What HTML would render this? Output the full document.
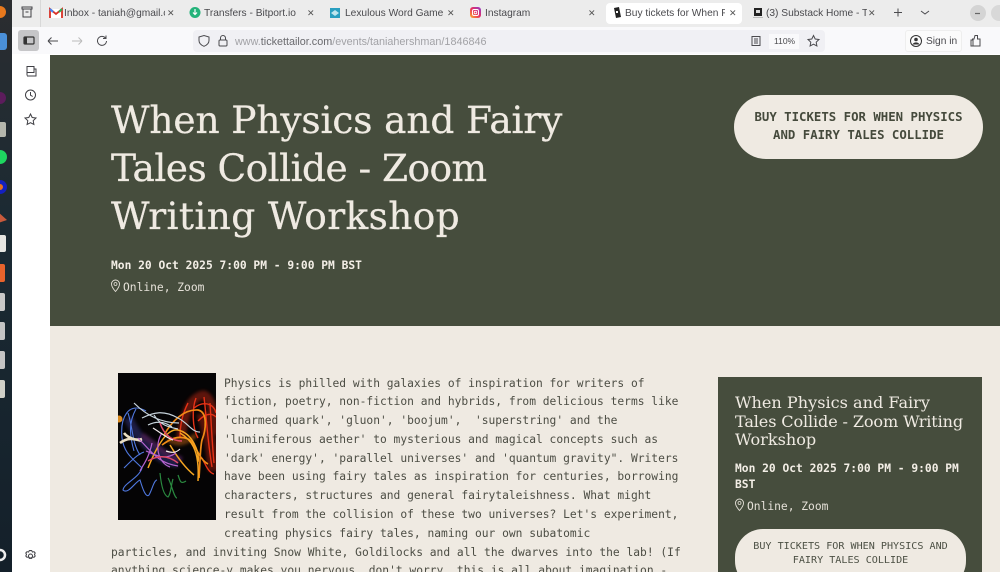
<!DOCTYPE html>
<html lang="en"><head><meta charset="utf-8"><title>Buy tickets</title>
<style>
*{margin:0;padding:0;box-sizing:border-box}
html,body{width:1000px;height:572px;overflow:hidden;background:#fff}
body{position:relative;font-family:"Liberation Sans",sans-serif}
.a{position:absolute;white-space:pre}
.m{font-family:"DejaVu Sans Mono","Liberation Mono",monospace;font-size:11.27px;line-height:18px;color:#45483c}
.s{font-family:"DejaVu Serif","Liberation Serif",serif;color:#efeae2}
.tab{position:absolute;top:4.500px;height:18px;font-size:10.2px;line-height:18px;color:#4a4a4e;white-space:nowrap;overflow:hidden}
.x{position:absolute;top:4px;font-size:9px;line-height:18px;color:#555}
</style></head><body>
<div class="a" style="left:0;top:0;width:1000px;height:27px;background:#ececec"></div>
<div class="a" style="left:0;top:27px;width:1000px;height:27px;background:#f9f9fb"></div>
<div class="a" style="left:0;top:0;width:12px;height:572px;background:linear-gradient(#2b2d30,#1b2a33 40%,#14202a)"></div>
<div class="a" style="left:12px;top:54px;width:38px;height:518px;background:#fff"></div>
<div class="a" style="left:12px;top:0;width:29px;height:27px;border-right:1px solid #d8d8d8"></div>
<div class="a" style="left:606px;top:3px;width:136px;height:21px;background:#fff;border-radius:4px"></div>
<div class="a" style="left:193px;top:30px;width:632px;height:22px;background:#f0f0f4;border-radius:4px"></div>
<div class="a" style="left:769px;top:34px;width:30px;height:15px;background:#f9f9fb"></div>
<div class="a" style="left:905px;top:30px;width:57px;height:22px;background:#fbfbfb;border:1px solid #eee;border-radius:3px"></div>

<svg class="a" style="left:0;top:0" width="50" height="572" viewBox="0 0 50 572">
<circle cx="0" cy="12" r="6" fill="#e8791d"/>
<rect x="-4" y="33" width="11" height="17" rx="3" fill="#4a90d9"/>
<circle cx="0" cy="98" r="6" fill="#5c1c5c"/>
<rect x="-4" y="122" width="10" height="15" rx="2" fill="#b4b6ac"/>
<circle cx="0" cy="157" r="7" fill="#1ed760"/>
<circle cx="0" cy="187" r="7" fill="#1420c0"/><circle cx="0" cy="187" r="3" fill="#e8701d"/>
<path d="M-2 212l9 8-9 3z" fill="#c85a3c"/>
<rect x="-4" y="235" width="10" height="17" rx="2" fill="#e6e6e2"/>
<rect x="-4" y="264" width="9" height="18" rx="2" fill="#e8632c"/>
<rect x="-4" y="293" width="9" height="18" rx="2" fill="#c8c8c8"/>
<rect x="-4" y="322" width="9" height="18" rx="2" fill="#c4c4c4"/>
<rect x="-4" y="351" width="9" height="18" rx="2" fill="#c4c4c4"/>
<rect x="-4" y="380" width="9" height="18" rx="2" fill="#d0d0c8"/>
<circle cx="0" cy="555" r="5" fill="none" stroke="#eee" stroke-width="2.5"/>
<rect x="18" y="30" width="21" height="21" rx="3" fill="#c6c6c8"/>
<rect x="24" y="37" width="10" height="7" rx="1" fill="none" stroke="#333" stroke-width="1.2"/><rect x="24" y="37" width="3" height="7" fill="#333"/>
<g fill="none" stroke="#3f3f44" stroke-width="1">
<path d="M22 7h10v2H22zM23 9v8h8V9M25.5 12h3"/>
<path d="M27 66.500h7v6h-7zM27 72.500v3M34 69h2v7h-9"/>
<circle cx="30.500" cy="95" r="5"/><path d="M30.500 92v3.200l2.200 1.300"/>
<path d="M30.500 114l1.700 3.500 3.800.5-2.800 2.700.7 3.800-3.400-1.800-3.400 1.800.7-3.800-2.800-2.700 3.800-.5z"/>
<circle cx="30.500" cy="556" r="2"/><path d="M30.500 550.500l1.200.1.700 1.500 1.600-.4 1.200 1.300-.7 1.500.7 1.500-1.200 1.300-1.600-.4-.7 1.500h-2.400l-.7-1.500-1.600.4-1.200-1.300.7-1.500-.7-1.500 1.200-1.300 1.600.4.700-1.500z"/>
</g>
</svg>

<svg class="a" style="left:0;top:0" width="1000" height="54" viewBox="0 0 1000 54">
<path d="M50 9h12v9H50z" fill="#fff"/><path d="M50 18V9l6 5 6-5v9" fill="none" stroke="#d93025" stroke-width="1.800"/><path d="M50 9l3 3" stroke="#4285f4" stroke-width="2"/><path d="M62 9l-3 3" stroke="#34a853" stroke-width="2"/>
<circle cx="195" cy="12.500" r="5.500" fill="#23b37a"/><path d="M195 9v5M193 12.500l2 2 2-2" fill="none" stroke="#fff" stroke-width="1.200"/>
<rect x="330" y="8" width="10" height="10" fill="#2a9fc0"/><path d="M331 13l4-3 4 3-4 3z" fill="#bfe6ee"/>
<defs><linearGradient id="ig" x1="0" y1="1" x2="1" y2="0"><stop offset="0" stop-color="#fdb52a"/><stop offset=".5" stop-color="#e8305f"/><stop offset="1" stop-color="#8a3ad0"/></linearGradient></defs>
<rect x="470" y="7" width="11" height="11" rx="3" fill="url(#ig)"/><rect x="472.500" y="9.500" width="6" height="6" rx="1.500" fill="none" stroke="#fff"/><circle cx="475.500" cy="12.500" r="1.300" fill="none" stroke="#fff" stroke-width=".8"/>
<path d="M614 8l5-1 2 10-5 1z" fill="#222"/><rect x="616" y="11" width="2" height="2" fill="#fff"/>
<rect x="754" y="8" width="8" height="8" fill="#222"/><rect x="756" y="10" width="4" height="3" fill="#ddd"/><rect x="753" y="17" width="10" height="1" fill="#bbb"/>
<circle cx="978" cy="13" r="8" fill="#d4d4d4"/><path d="M975 13.500h5" stroke="#666" stroke-width="1.200"/><circle cx="999" cy="13" r="8" fill="#d8d8d8"/>
<g fill="none" stroke="#4a4a4e" stroke-width="1">
<path d="M898 8.500v8M894 12.500h8"/><path d="M921 11l4 3 4-3"/>
<path d="M48 41h10M48 41l3.500-3.500M48 41l3.500 3.500"/>
<path d="M72 41h10M82 41l-3.500-3.500M82 41l-3.500 3.500" stroke="#bbb"/>
<path d="M105.500 38a4.500 4.500 0 1 0 1 3M106 35.500v3h-3"/>
<path d="M199 37l5-1.500 5 1.500v3.500c0 3-2.500 4.800-5 5.800-2.500-1-5-2.800-5-5.800z"/>
<rect x="219" y="40" width="8" height="6" rx="1"/><path d="M220.500 40v-2a2.500 2.500 0 0 1 5 0v2"/>
<path d="M752 36.500h8v9h-8zM754 39h4M754 41h4M754 43h4"/>
<path d="M813.500 35.500l1.700 3.500 3.800.5-2.800 2.700.7 3.800-3.400-1.800-3.400 1.800.7-3.800-2.800-2.700 3.800-.5z"/>
<path d="M972 46h8v-7h-2.500v-3.500h-2.500l-1 3.500h-2M971 40h2v6h-2z"/>
</g>
<circle cx="916" cy="41" r="5.500" fill="none" stroke="#333"/><circle cx="916" cy="39.500" r="1.800" fill="#333"/><path d="M912.500 44.500a4 4 0 0 1 7 0z" fill="#333"/>
</svg>

<div class="tab" style="left:64px;width:101px">Inbox - taniah@gmail.c</div><div class="x" style="left:167px">✕</div>
<div class="tab" style="left:204px;width:102px">Transfers - Bitport.io</div><div class="x" style="left:307px">✕</div>
<div class="tab" style="left:345px;width:102px">Lexulous Word Game |</div><div class="x" style="left:447px">✕</div>
<div class="tab" style="left:485px;width:70px">Instagram</div><div class="x" style="left:588px">✕</div>
<div class="tab" style="left:625px;width:100px">Buy tickets for When P</div><div class="x" style="left:729px">✕</div>
<div class="tab" style="left:766px;width:101px">(3) Substack Home - Ta</div><div class="x" style="left:868px">✕</div>
<div class="a" style="left:235px;top:34px;font-size:10.800px;line-height:16px;color:#a2a2a6">www.<span style="color:#6a6a6e">tickettailor.com</span>/events/taniahershman/1846846</div>
<div class="a" style="left:774px;top:34px;font-size:8.500px;line-height:15px;color:#4a4a4e">110%</div>
<div class="a" style="left:926px;top:34px;font-size:10.200px;line-height:16px;color:#4a4a4e">Sign in</div>

<div class="a" style="left:50px;top:55px;width:950px;height:271px;background:#464d3d"></div>
<div class="a" style="left:50px;top:326px;width:950px;height:246px;background:#efeae2"></div>

<div class="a s" style="left:111px;top:96px;font-size:37.500px;line-height:48px;-webkit-text-stroke:.25px #efeae2"><span style="letter-spacing:-.14px">When Physics and Fairy</span>
<span style="letter-spacing:-.55px">Tales Collide - Zoom</span>
<span style="letter-spacing:.37px">Writing Workshop</span></div>
<div class="a m" style="left:111px;top:257px;color:#f3eee6;font-weight:bold">Mon 20 Oct 2025 7:00 PM - 9:00 PM BST</div>
<svg class="a" style="left:110px;top:279px" width="11" height="14" viewBox="0 0 11 14"><path d="M5.500 1a4 4 0 0 1 4 4c0 3-4 7.500-4 7.500S1.500 8 1.500 5a4 4 0 0 1 4-4z" fill="none" stroke="#e5e1d8" stroke-width=".9"/><circle cx="5.500" cy="5" r="1.500" fill="none" stroke="#e5e1d8" stroke-width=".8"/></svg>
<div class="a m" style="left:123px;top:279px;color:#e5e1d8">Online, Zoom</div>

<div class="a" style="left:734px;top:95px;width:249px;height:64px;background:#efeae2;border-radius:32px"></div>
<div class="a m" style="left:734px;width:249px;top:108px;text-align:center;color:#454a3c;font-weight:bold;font-size:12.350px">BUY TICKETS FOR WHEN PHYSICS
AND FAIRY TALES COLLIDE</div>

<svg class="a" style="left:118px;top:373px" width="98" height="147" viewBox="0 0 98 147">
<defs><filter id="gl" x="-20%" y="-20%" width="140%" height="140%"><feGaussianBlur stdDeviation="1.600"/></filter><filter id="sf"><feGaussianBlur stdDeviation=".35"/></filter></defs>
<rect width="98" height="147" fill="#050405"/>
<g fill="none" filter="url(#gl)" opacity=".45">
<path d="M62 70C66 40 72 25 85 22c8 0 13 25 13 40" stroke="#c92a12" stroke-width="9"/>
<path d="M84 40c6 15 10 35 12 58" stroke="#b52010" stroke-width="12"/>
<path d="M10 45c10 20 30 45 50 45" stroke="#3b3a90" stroke-width="9"/>
<path d="M24 62c15 10 25 22 40 24" stroke="#8a3aa0" stroke-width="5"/>
<path d="M50 66c8 6 16 6 28-4" stroke="#d87018" stroke-width="5"/>
</g>
<g fill="none" filter="url(#sf)">
<path d="M76 35c10-8 20-4 22 5M80 48c8-8 14-8 18-4M84 85c4 8 7 15 12 16M70 30c-5 10-8 20-8 35M78 25c-4 10-4 30 2 40M86 24c2 15 3 40 8 70M92 30c1 15 2 40 4 60" stroke="#e53015" stroke-width="1.400"/>
<path d="M46 62c8-14 20-26 34-25 10 2 8 20 4 30-2 8-2 25-3 38M44 72c8-6 16-10 26-6 8 4 10 20 20 25" stroke="#f08a18" stroke-width="1.700"/>
<path d="M30 95c10-25 20-40 30-38 14 3 22 22 20 32M62 60c10 6 20 15 18 48M52 72c6 10 14 22 24 30" stroke="#f5a520" stroke-width="1.500"/>
<path d="M28 38C10 28 2 45 4 65c2 15 10 20 20 30-3 10-18 15-19 22 5 5 12-8 17-10 3 10 6 18 9 15 3-5 5-15 8-15M10 40c5 15 4 30 12 42M18 36c-8 14-6 28-2 42M6 95c8-8 14-14 20-16" stroke="#4f78e0" stroke-width="1.100"/>
<path d="M16 30c15 15 30 20 45 20M24 45c12-6 22-8 36 0 10 5 15 15 22 14M36 42c6 10 14 12 24 14M30 52c8-4 16-4 24 2" stroke="#c8d4dc" stroke-width="1.200"/>
<path d="M2 70c8-6 14-4 22-2M6 60c4 5 12 8 18 6" stroke="#eadfc4" stroke-width="2.600"/>
<path d="M20 65c15 15 20 25 40 28M34 70c-3 15-9 22-12 28M44 60c-8 12-4 30 8 34M28 78c10 4 18 10 30 2" stroke="#b864d0" stroke-width="1.200"/>
<path d="M42 100c1 10 3 22 8 24 3-3 3-12 5-18M50 105c3 4 6 20 9 20M60 102c2 5 2 10 8 6" stroke="#2a8a40" stroke-width="1.200"/>
<path d="M30 88c10-6 20-6 30 2M42 50c4 12 12 18 22 18" stroke="#e04868" stroke-width="1.500"/>
<path d="M35 55c8 5 14 10 20 12M48 78c6 2 10 2 14-2" stroke="#f4ecec" stroke-width="1.200"/>
</g>
<circle cx="1" cy="46" r="3.500" fill="#d88a20"/>
</svg>

<div class="a m" style="left:224px;top:374.500px;line-height:18.800px;color:#4c4d44">Physics is philled with galaxies of inspiration for writers of
fiction, poetry, non-fiction and hybrids, from delicious terms like
'charmed quark', 'gluon', 'boojum',  'superstring' and the
'luminiferous aether' to mysterious and magical concepts such as
'dark' energy', 'parallel universes' and 'quantum gravity". Writers
have been using fairy tales as inspiration for centuries, borrowing
characters, structures and general fairytaleishness. What might
result from the collision of these two universes? Let's experiment,
creating physics fairy tales, naming our own subatomic</div>
<div class="a m" style="left:111px;top:543.500px;line-height:18.800px;color:#4c4d44">particles, and inviting Snow White, Goldilocks and all the dwarves into the lab! (If
anything science-y makes you nervous, don't worry, this is all about imagination -</div>

<div class="a" style="left:718px;top:377px;width:264px;height:195px;background:#464d3d"></div>
<div class="a s" style="left:735px;top:394px;font-size:16.100px;line-height:18.500px">When Physics and Fairy
<span style="letter-spacing:-.14px">Tales Collide - Zoom Writing</span>
Workshop</div>
<div class="a m" style="left:735px;top:461px;line-height:16px;color:#f3eee6;font-weight:bold">Mon 20 Oct 2025 7:00 PM - 9:00 PM
BST</div>
<svg class="a" style="left:734px;top:498px" width="11" height="14" viewBox="0 0 11 14"><path d="M5.500 1a4 4 0 0 1 4 4c0 3-4 7.500-4 7.500S1.500 8 1.500 5a4 4 0 0 1 4-4z" fill="none" stroke="#e5e1d8" stroke-width=".9"/><circle cx="5.500" cy="5" r="1.500" fill="none" stroke="#e5e1d8" stroke-width=".8"/></svg>
<div class="a m" style="left:747px;top:498px;color:#e5e1d8">Online, Zoom</div>
<div class="a" style="left:735px;top:529px;width:231px;height:60px;background:#efeae2;border-radius:28px"></div>
<div class="a m" style="left:735px;width:231px;top:540px;text-align:center;line-height:14px;color:#4c5044;font-size:10.100px">BUY TICKETS FOR WHEN PHYSICS AND
FAIRY TALES COLLIDE</div>
</body></html>
